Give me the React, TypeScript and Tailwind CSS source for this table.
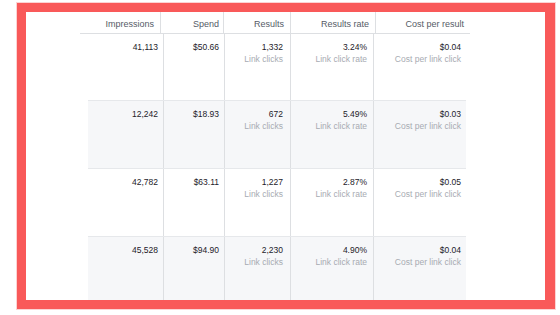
import React from "react";

const rows = [
  { imp: "41,113", spend: "$50.66", res: "1,332", rate: "3.24%", cost: "$0.04", alt: false },
  { imp: "12,242", spend: "$18.93", res: "672", rate: "5.49%", cost: "$0.03", alt: true },
  { imp: "42,782", spend: "$63.11", res: "1,227", rate: "2.87%", cost: "$0.05", alt: false },
  { imp: "45,528", spend: "$94.90", res: "2,230", rate: "4.90%", cost: "$0.04", alt: true },
];

function Val({ v, sub }: { v: string; sub?: string }) {
  return (
    <div className="flex flex-col items-end">
      <div className="text-[8.5px] leading-[12px] text-[#1d2129]">{v}</div>
      {sub && <div className="text-[8.5px] leading-[13px] text-[#a7abb2]">{sub}</div>}
    </div>
  );
}

export default function App() {
  return (
    <div
      className="w-[560px] h-[315px] bg-white overflow-hidden"
      style={{ fontFamily: '"Liberation Sans", Arial, sans-serif' }}
    >
      <div className="ml-[17px] mt-[3px] w-[538px] h-[306px] border-[9px] border-r-[10px] border-[#f95959] shadow-[0_0_0_1px_#fcd3d3] bg-white overflow-hidden">
        {/* header */}
        <div className="ml-[54px] flex h-[22px] w-[390px] border-b border-[#dddfe2] text-[9px] leading-[12px] text-[#555b66]">
          <div className="w-[81px] flex items-end pb-[3px] justify-end pr-[6px] border-r border-[#dddfe2]">Impressions</div>
          <div className="w-[63px] flex items-end pb-[3px] justify-end pr-[4px] border-r border-[#dddfe2]">Spend</div>
          <div className="w-[67px] flex items-end pb-[3px] justify-end pr-[6px] border-r border-[#dddfe2]">Results</div>
          <div className="w-[85px] flex items-end pb-[3px] justify-end pr-[6px] border-r border-[#dddfe2]">Results rate</div>
          <div className="w-[94px] flex items-end pb-[3px] justify-end pr-[6px]">Cost per result</div>
        </div>
        {/* body */}
        <div className="ml-[62px] w-[378px] flex flex-col">
          {rows.map((r, i) => (
            <div
              key={i}
              className={`flex ${i === 0 ? "h-[66px]" : "h-[68px] border-t border-[#e6e8eb]"} ${r.alt ? "bg-[#f6f7f9]" : "bg-white"}`}
            >
              <div className="w-[76px] pt-[7px] pr-[5px] border-r border-[#dddfe2]">
                <Val v={r.imp} />
              </div>
              <div className="w-[61px] pt-[7px] pr-[5px] border-r border-[#dddfe2]">
                <Val v={r.spend} />
              </div>
              <div className="w-[66px] pt-[7px] pr-[7px] border-r border-[#dddfe2]">
                <Val v={r.res} sub="Link clicks" />
              </div>
              <div className="w-[83px] pt-[7px] pr-[6px] border-r border-[#dddfe2]">
                <Val v={r.rate} sub="Link click rate" />
              </div>
              <div className="w-[92px] pt-[7px] pr-[5px]">
                <Val v={r.cost} sub="Cost per link click" />
              </div>
            </div>
          ))}
        </div>
      </div>
    </div>
  );
}
